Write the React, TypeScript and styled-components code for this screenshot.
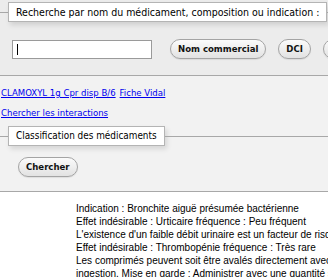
import styled, { createGlobalStyle } from 'styled-components'

const GlobalStyle = createGlobalStyle`
  html, body {
    margin: 0;
    padding: 0;
    background: #ffffff;
    overflow: hidden;
  }
  body {
    font-family: 'DejaVu Sans Condensed', 'DejaVu Sans', sans-serif;
    font-size: 11px;
    color: #000;
  }
`

const Page = styled.div`
  width: 328px;
  height: 277px;
  overflow: hidden;
`

const SearchPanel = styled.section`
  background: #ececec;
  padding-top: 2px;
  height: 73px;
  border-bottom: 1px solid #a8a8a8;
`

const LowerPanel = styled.section`
  background: #f2f2f2;
  height: 115px;
  border-bottom: 1px solid #a8a8a8;
`

const LegendRow = styled.div`
  display: flex;
  align-items: center;
  height: 20px;
`

const Rule = styled.div<{ $w?: number }>`
  height: 1px;
  background: #a8a8a8;
  width: ${(p) => (p.$w ? `${p.$w}px` : 'auto')};
  flex: ${(p) => (p.$w ? 'none' : '1')};
`

const Legend = styled.div<{ $size?: number }>`
  flex: none;
  height: 18px;
  line-height: 18px;
  padding: 0 7px;
  background: #ffffff;
  border: 1px solid #b4b4b4;
  box-shadow: 2px 3px 5px rgba(0, 0, 0, 0.12);
  font-size: ${(p) => p.$size ?? 10.5}px;
  white-space: nowrap;
`

const SearchRow = styled.div`
  display: flex;
  align-items: center;
  gap: 12px;
  padding-left: 12px;
  margin-top: 17px;
  white-space: nowrap;
`

const TextInput = styled.div`
  flex: none;
  width: 134px;
  height: 17px;
  border: 1px solid #9a9a9a;
  background: #fff;
  margin-right: 6px;
  display: flex;
  align-items: center;
  padding-left: 4px;
  &::before {
    content: '';
    width: 1px;
    height: 11px;
    background: #000;
  }
`

const Pill = styled.button`
  flex: none;
  height: 20px;
  padding: 0 7px;
  border-radius: 10px;
  border: 1px solid #a4a4a4;
  background: linear-gradient(#fbfbfb, #e2e2e2);
  box-shadow: 0 1px 1px rgba(0, 0, 0, 0.08);
  font-family: 'DejaVu Sans Condensed', 'DejaVu Sans', sans-serif;
  font-size: 9.5px;
  font-weight: bold;
  color: #111;
  line-height: 18px;
`

const Links = styled.div`
  padding: 11px 0 0 1px;
  display: flex;
  flex-direction: column;
  gap: 9px;
`

const LinkLine = styled.div`
  display: flex;
  gap: 4px;
  white-space: nowrap;
`

const Link = styled.a`
  color: #0000ee;
  text-decoration: underline;
  font-size: 9.5px;
`

const ClassifRow = styled(LegendRow)`
  margin-top: 8px;
`

const ChercherRow = styled.div`
  padding: 11px 0 0 18px;
`

const Results = styled.div`
  padding: 10px 0 0 76px;
  font-family: 'Liberation Sans', Arial, sans-serif;
  font-size: 10px;
  line-height: 13px;
  white-space: nowrap;
`

const lines = [
  'Indication : Bronchite aiguë présumée bactérienne',
  'Effet indésirable : Urticaire fréquence : Peu fréquent',
  "L'existence d'un faible débit urinaire est un facteur de risque",
  'Effet indésirable : Thrombopénie fréquence : Très rare',
  'Les comprimés peuvent soit être avalés directement avec',
  'ingestion. Mise en garde : Administrer avec une quantité su',
  'Effet indésirable : Colite hémorragique fréquence : Très ra',
]

export default function App() {
  return (
    <Page>
      <GlobalStyle />
      <SearchPanel>
        <LegendRow>
          <Rule $w={8} />
          <Legend>Recherche par nom du médicament, composition ou indication :</Legend>
          <Rule />
        </LegendRow>
        <SearchRow>
          <TextInput />
          <Pill>Nom commercial</Pill>
          <Pill>DCI</Pill>
          <Pill>Composition</Pill>
        </SearchRow>
      </SearchPanel>
      <LowerPanel>
        <Links>
          <LinkLine>
            <Link href="#">CLAMOXYL 1g Cpr disp B/6</Link>
            <Link href="#">Fiche Vidal</Link>
          </LinkLine>
          <LinkLine>
            <Link href="#">Chercher les interactions</Link>
          </LinkLine>
        </Links>
        <ClassifRow>
          <Rule $w={8} />
          <Legend $size={9.9}>Classification des médicaments</Legend>
          <Rule />
        </ClassifRow>
        <ChercherRow>
          <Pill>Chercher</Pill>
        </ChercherRow>
      </LowerPanel>
      <Results>
        {lines.map((l) => (
          <div key={l}>{l}</div>
        ))}
      </Results>
    </Page>
  )
}
